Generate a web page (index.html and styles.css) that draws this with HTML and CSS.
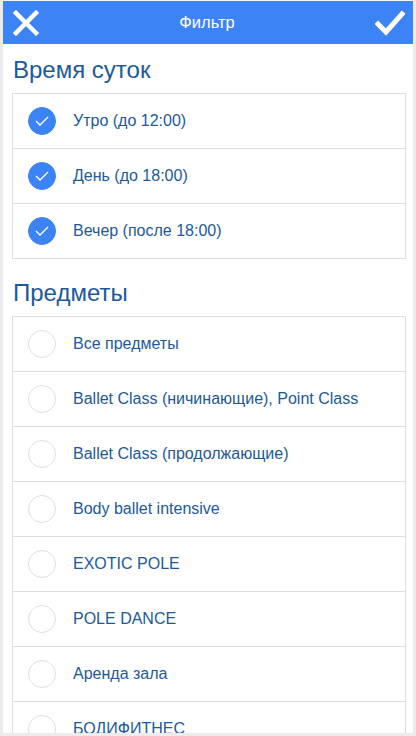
FILE: index.html
```html
<!DOCTYPE html>
<html lang="ru">
<head>
<meta charset="utf-8">
<link rel="stylesheet" href="styles.css">
</head>
<body>
<div class="page">
  <header class="bar">
    <svg class="bar-icon" width="26" height="26" viewBox="0 0 26 26"><path d="M3 3 L23 23 M23 3 L3 23" stroke="#fff" stroke-width="4.5" stroke-linecap="square" fill="none"/></svg>
    <div class="bar-title">Фильтр</div>
    <svg class="bar-icon" width="30" height="26" viewBox="0 0 30 26"><path d="M3 14 L11 22 L27 4" stroke="#fff" stroke-width="5" stroke-linecap="square" stroke-linejoin="miter" fill="none"/></svg>
  </header>
  <div class="content">
    <h2 class="section-title">Время суток</h2>
    <ul class="list">
      <li class="row"><span class="radio on"><svg width="14" height="10" viewBox="0 0 14 10"><path d="M1 5 L5 9 L13 1" stroke="#fff" stroke-width="1.3" fill="none"/></svg></span><span class="label">Утро (до 12:00)</span></li>
      <li class="row"><span class="radio on"><svg width="14" height="10" viewBox="0 0 14 10"><path d="M1 5 L5 9 L13 1" stroke="#fff" stroke-width="1.3" fill="none"/></svg></span><span class="label">День (до 18:00)</span></li>
      <li class="row"><span class="radio on"><svg width="14" height="10" viewBox="0 0 14 10"><path d="M1 5 L5 9 L13 1" stroke="#fff" stroke-width="1.3" fill="none"/></svg></span><span class="label">Вечер (после 18:00)</span></li>
    </ul>
    <h2 class="section-title">Предметы</h2>
    <ul class="list">
      <li class="row"><span class="radio"></span><span class="label">Все предметы</span></li>
      <li class="row"><span class="radio"></span><span class="label">Ballet Class (ничинающие), Point Class</span></li>
      <li class="row"><span class="radio"></span><span class="label">Ballet Class (продолжающие)</span></li>
      <li class="row"><span class="radio"></span><span class="label">Body ballet intensive</span></li>
      <li class="row"><span class="radio"></span><span class="label">EXOTIC POLE</span></li>
      <li class="row"><span class="radio"></span><span class="label">POLE DANCE</span></li>
      <li class="row"><span class="radio"></span><span class="label">Аренда зала</span></li>
      <li class="row"><span class="radio"></span><span class="label">БОДИФИТНЕС</span></li>
    </ul>
  </div>
</div>
</body>
</html>
```
FILE: styles.css
```css
* { box-sizing: border-box; }
html, body { margin: 0; padding: 0; background: #fff; }
body { font-family: "Liberation Sans", Arial, sans-serif; }
.page {
  height: 736px;
  overflow: hidden;
  border-top: 1px solid #f4f4f4;
  border-left: 3px solid #ececec;
  border-right: 3px solid #ececec;
  border-bottom: 3px solid #ececec;
  display: flex;
  flex-direction: column;
}
.bar {
  flex: 0 0 43px;
  background: #3c83f5;
  display: flex;
  align-items: center;
  justify-content: space-between;
  padding: 0 8px 0 10px;
}
.bar-icon { display: block; }
.bar-title { color: #fff; font-size: 16.5px; }
.content {
  flex: 1;
  overflow: hidden;
  padding: 0 7px 0 9px;
}
.section-title {
  margin: 0;
  font-weight: normal;
  font-size: 24px;
  color: #1c5a9a;
  height: 49px;
  padding: 12px 0 0 1px;
  line-height: 28px;
}
.list {
  list-style: none;
  margin: 0 0 8px 0;
  padding: 0;
  border: 1px solid #dedede;
  border-top: none;
}
.row {
  height: 55px;
  border-top: 1px solid #dedede;
  display: flex;
  align-items: center;
  padding-left: 15px;
}
.radio {
  width: 28px;
  height: 28px;
  border-radius: 50%;
  border: 1px solid #e0e0e0;
  background: #fff;
  display: flex;
  align-items: center;
  justify-content: center;
  flex: 0 0 28px;
}
.radio.on { background: #3c83f5; border-color: #3c83f5; }
.label {
  margin-left: 17px;
  font-size: 16px;
  color: #1c5a9a;
}
```
